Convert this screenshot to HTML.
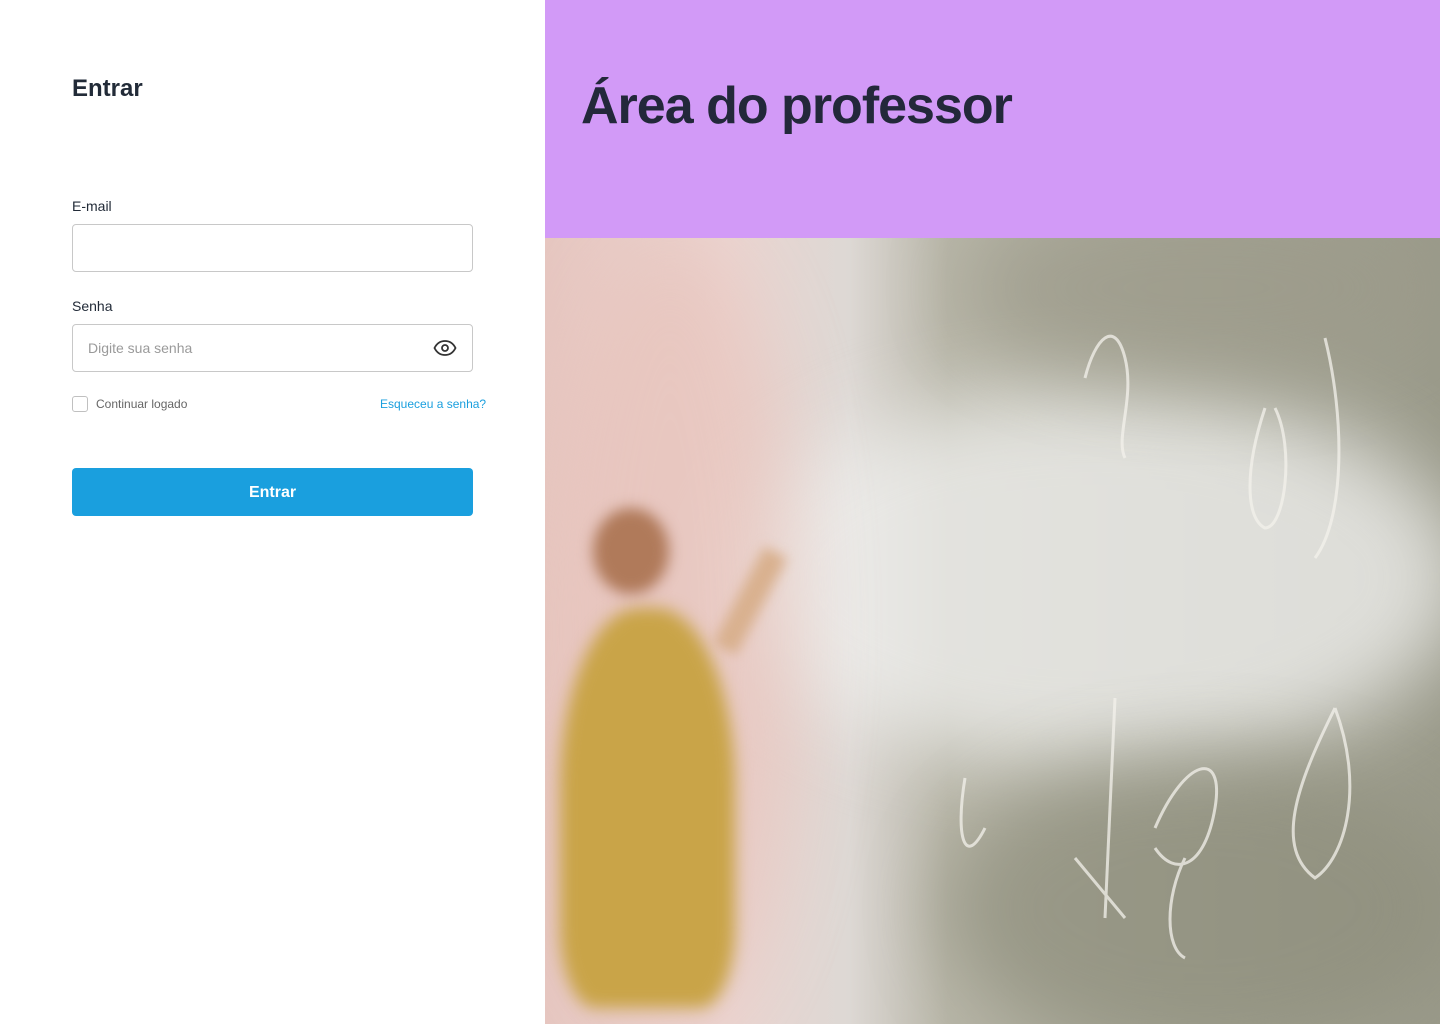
<!DOCTYPE html>
<html><head><meta charset="utf-8"><style>
*{margin:0;padding:0;box-sizing:border-box}
body{width:1440px;height:1024px;overflow:hidden;font-family:"Liberation Sans",sans-serif;background:#fff;position:relative}
.left{position:absolute;left:0;top:0;width:545px;height:1024px}
h1{position:absolute;left:72px;top:75px;font-size:24px;font-weight:bold;color:#222b38}
.lbl{position:absolute;left:72px;font-size:14px;color:#222b38}
.inp{position:absolute;left:72px;width:401px;height:48px;border:1px solid #c8c8c8;border-radius:4px}
.ph{position:absolute;left:15px;top:15px;font-size:14px;color:#9a9a9a}
.cb{position:absolute;left:72px;top:396px;width:16px;height:16px;border:1px solid #c0c0c0;border-radius:3px}
.small{position:absolute;top:397px;font-size:12px}
.btn{position:absolute;left:72px;top:468px;width:401px;height:48px;background:#1a9fde;border-radius:4px;color:#fff;font-weight:bold;font-size:16px;text-align:center;line-height:50px}
.right{position:absolute;left:545px;top:0;width:895px;height:1024px;overflow:hidden}
.top{position:absolute;left:0;top:0;width:895px;height:238px;background:#d29af7}
.top h2{position:absolute;left:36px;top:76px;font-size:52px;font-weight:bold;color:#23283a;letter-spacing:-1px}
.photo{position:absolute;left:0;top:238px;width:895px;height:786px;overflow:hidden;
background:linear-gradient(90deg,#e6c6c0 0%,#ebd4d0 20%,#ddd8d4 34%,#b8b6a8 45%,#a8a898 70%,#9a9a8a 100%)}
.b{position:absolute;filter:blur(40px);border-radius:50%}
</style></head><body>
<div class="left">
<h1>Entrar</h1>
<div class="lbl" style="top:198px">E-mail</div>
<div class="inp" style="top:224px"></div>
<div class="lbl" style="top:298px">Senha</div>
<div class="inp" style="top:324px"><span class="ph">Digite sua senha</span>
<svg style="position:absolute;left:360px;top:13px" width="24" height="20" viewBox="0 0 24 20" fill="none" stroke="#333" stroke-width="1.8"><path d="M1.5 10C4 5 7.5 3 12 3s8 2 10.5 7c-2.5 5-6 7-10.5 7S4 15 1.5 10z"/><circle cx="12" cy="10" r="3"/></svg></div>
<div class="cb"></div>
<div class="small" style="left:96px;color:#666">Continuar logado</div>
<div class="small" style="left:380px;color:#1a9fde">Esqueceu a senha?</div>
<div class="btn">Entrar</div>
</div>
<div class="right">
<div class="top"><h2>Área do professor</h2></div>
<div class="photo">
<div class="b" style="left:180px;top:150px;width:740px;height:380px;background:#eeeeec;opacity:.8"></div>
<div class="b" style="left:0;top:0;width:250px;height:786px;background:#e8c4bc;opacity:.7"></div>
<div class="b" style="left:420px;top:-40px;width:480px;height:180px;background:#9c9a8a;opacity:.7"></div>
<div class="b" style="left:400px;top:520px;width:520px;height:300px;background:#8e8e7c;opacity:.7"></div>
<svg style="position:absolute;left:0;top:0" width="895" height="786" fill="none" stroke="#f4f2ec" stroke-width="3" opacity=".75">
<path d="M540 140c10-40 30-60 40-20s-10 80 0 100"/><path d="M720 170c-20 60-20 110 0 120 20 0 30-80 10-120"/>
<path d="M780 100c20 80 20 180-10 220"/><path d="M420 540c-10 60 0 90 20 50"/><path d="M570 460l-10 220"/>
<path d="M610 590c30-70 70-80 60-20s-40 70-60 40"/><path d="M790 470c-40 80-60 140-20 170 30-20 50-90 20-170"/>
<path d="M640 620c-20 40-20 90 0 100"/><path d="M530 620l50 60"/></svg>
<div style="position:absolute;left:15px;top:370px;width:175px;height:400px;background:#c9a448;border-radius:45% 45% 20% 20%;filter:blur(8px)"></div>
<div style="position:absolute;left:48px;top:270px;width:76px;height:86px;background:#b07a5a;border-radius:50%;filter:blur(7px)"></div>
<div style="position:absolute;left:150px;top:350px;width:110px;height:26px;background:#d9b18f;transform:rotate(-62deg);filter:blur(6px)"></div>
</div>
</div>
</body></html>
